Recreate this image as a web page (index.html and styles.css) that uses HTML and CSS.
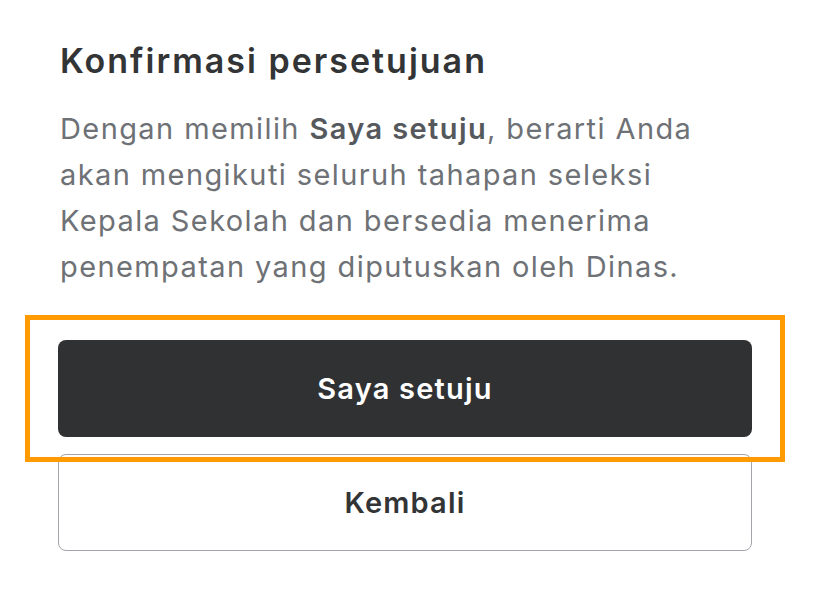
FILE: index.html
```html
<html>
<head>
  <meta charset="utf-8" />
  <link rel="stylesheet" href="styles.css">
</head>
<body>
  <div id="dialog">
    <h1 class="title">Konfirmasi persetujuan</h1>
    <p class="desc">Dengan memilih <b>Saya setuju</b>, berarti Anda akan mengikuti seluruh tahapan seleksi Kepala Sekolah dan bersedia menerima penempatan yang diputuskan oleh Dinas.</p>
    <div class="actions">
      <div class="focus-wrap">
        <button class="btn btn-primary" type="button">Saya setuju</button>
        <span class="focus-ring"></span>
      </div>
      <button class="btn btn-outline" type="button">Kembali</button>
    </div>
  </div>
</body>
</html>
```

FILE: styles.css
```css
body {
  margin: 0;
  background: #fff;
  font-family: "Inter", "Noto Sans", sans-serif;
}

#dialog {
  width: 694px;
  padding: 40px 0 0 58px;
}

.title {
  margin: 0 0 0 2px;
  font-size: 34px;
  line-height: 42px;
  font-weight: 600;
  letter-spacing: 2px;
  color: #333436;
}

.desc {
  width: 660px;
  margin: 24px 0 0 2px;
  font-size: 29px;
  line-height: 46px;
  letter-spacing: 1.4px;
  color: #6e7175;
}

.desc b {
  font-weight: 600;
  color: #55585c;
}

.actions {
  display: flex;
  flex-direction: column;
  gap: 17px;
  margin-top: 50px;
}

.focus-wrap {
  position: relative;
}

.btn {
  display: block;
  width: 100%;
  border-radius: 8px;
  font-family: inherit;
  font-size: 29px;
  font-weight: 600;
  letter-spacing: 1.2px;
  cursor: pointer;
}

.btn-primary {
  height: 97px;
  border: none;
  background: #303133;
  color: #fff;
}

.btn-outline {
  height: 97px;
  border: 1.5px solid #a2a5a9;
  background: #fff;
  color: #333436;
}

.focus-ring {
  position: absolute;
  top: -25px;
  bottom: -25px;
  left: -33px;
  right: -33px;
  border: 5px solid #ff9a00;
  z-index: 2;
  pointer-events: none;
}
```
